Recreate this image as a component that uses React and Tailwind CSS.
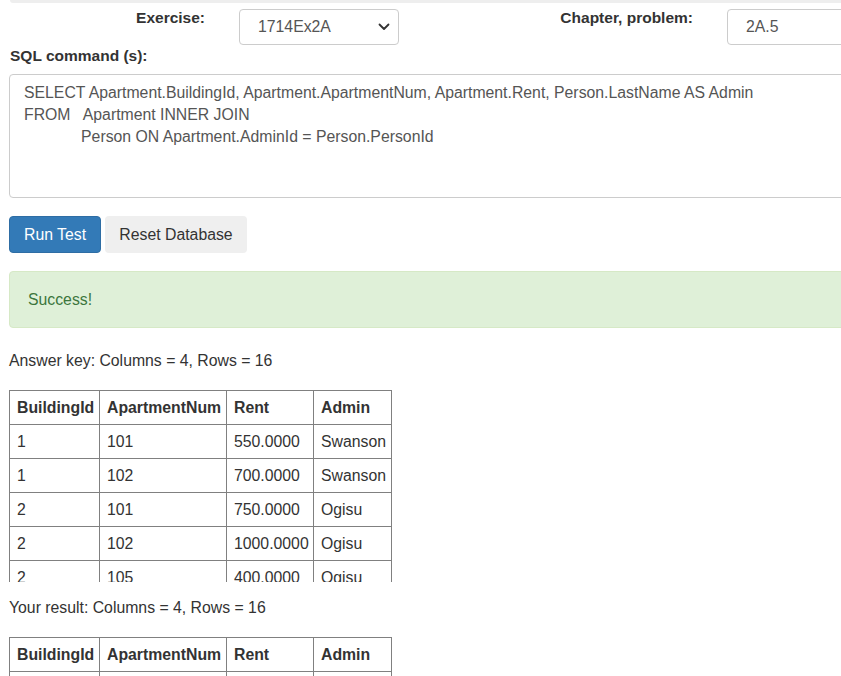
import React from 'react';

const rows = [
    ['1', '101', '550.0000', 'Swanson'],
    ['1', '102', '700.0000', 'Swanson'],
    ['2', '101', '750.0000', 'Ogisu'],
    ['2', '102', '1000.0000', 'Ogisu'],
    ['2', '105', '400.0000', 'Ogisu'],
    ['3', '101', '350.0000', 'Moore'],
    ['3', '102', '650.0000', 'Moore'],
];

const ResultTable = () => (
    <table className="table-fixed border-collapse w-[382px] text-[15.8px] text-[#333]">
        <thead>
            <tr>
                <th className="w-[90px] border border-[#808080] px-[7px] py-[6px] leading-[21px] text-left font-bold">BuildingId</th>
                <th className="w-[127px] border border-[#808080] px-[7px] py-[6px] leading-[21px] text-left font-bold">ApartmentNum</th>
                <th className="w-[87px] border border-[#808080] px-[7px] py-[6px] leading-[21px] text-left font-bold">Rent</th>
                <th className="w-[78px] border border-[#808080] px-[7px] py-[6px] leading-[21px] text-left font-bold">Admin</th>
            </tr>
        </thead>
        <tbody>
            {rows.map((r, i) => (
                <tr key={i}>
                    {r.map((c, j) => (
                        <td key={j} className="border border-[#808080] px-[7px] py-[6px] leading-[21px] whitespace-nowrap">{c}</td>
                    ))}
                </tr>
            ))}
        </tbody>
    </table>
);

const App = () => {
    return (
        <div className="w-[841px] h-[676px] overflow-hidden bg-white text-[#333] font-['Liberation_Sans',Arial,sans-serif]">
            {/* bottom edge of the panel above */}
            <div className="h-[3px] ml-[10px] bg-[#eeeeee] rounded-bl-[5px]" />

            {/* Exercise / chapter row */}
            <div className="flex items-start">
                <label className="w-[205px] shrink-0 text-right pt-[5px] text-[15.5px] leading-[20px] font-bold">Exercise:</label>
                <div className="ml-[34px] mt-[6px] w-[160px] h-[36px] border border-[#ccc] rounded-[4px] flex items-center justify-between pl-[18px] pr-[8px] text-[15.8px] text-[#555] shrink-0">
                    <span>1714Ex2A</span>
                    <svg width="12" height="8" viewBox="0 0 12 8" fill="none">
                        <polyline points="1.5,1.5 6,6 10.5,1.5" stroke="#333" strokeWidth="1.8" strokeLinecap="round" strokeLinejoin="round" />
                    </svg>
                </div>
                <label className="w-[294px] text-right pt-[5px] text-[15.5px] leading-[20px] font-bold shrink-0">Chapter, problem:</label>
                <div className="ml-[34px] mt-[6px] w-[200px] h-[36px] border border-[#ccc] rounded-[4px] flex items-center pl-[18px] text-[15.8px] text-[#555] shrink-0">
                    2A.5
                </div>
            </div>

            {/* SQL command */}
            <div className="mt-[1px] pl-[10px] text-[15.5px] leading-[20px] font-bold">SQL command (s):</div>
            <div className="mt-[8px] ml-[9px] w-[900px] h-[124px] border border-[#ccc] rounded-[4px] pt-[7px] px-[14px] text-[15.8px] leading-[22px] text-[#555] whitespace-pre">
                {'SELECT Apartment.BuildingId, Apartment.ApartmentNum, Apartment.Rent, Person.LastName AS Admin\nFROM   Apartment INNER JOIN\n             Person ON Apartment.AdminId = Person.PersonId'}
            </div>

            {/* Buttons */}
            <div className="mt-[18px] ml-[9px] flex gap-[4px]">
                <button className="w-[92px] h-[37px] rounded-[4px] bg-[#337ab7] border border-[#2e6da4] text-white text-[15.8px]">Run Test</button>
                <button className="w-[142px] h-[37px] rounded-[4px] bg-[#efefef] text-[#333] text-[15.8px]">Reset Database</button>
            </div>

            {/* Alert */}
            <div className="mt-[18px] ml-[9px] w-[900px] h-[57px] flex items-center pl-[18px] bg-[#dff0d8] border border-[#d6e9c6] rounded-[4px] text-[#3c763d] text-[15.8px]">
                Success!
            </div>

            <div className="mt-[22px] pl-[9px] text-[15.8px] leading-[22px]">Answer key: Columns = 4, Rows = 16</div>
            <div className="mt-[18px] ml-[9px] h-[192px] overflow-hidden">
                <ResultTable />
            </div>

            <div className="mt-[15px] pl-[9px] text-[15.8px] leading-[22px]">Your result: Columns = 4, Rows = 16</div>
            <div className="mt-[18px] ml-[9px] h-[192px] overflow-hidden">
                <ResultTable />
            </div>
        </div>
    );
};

export default App;
